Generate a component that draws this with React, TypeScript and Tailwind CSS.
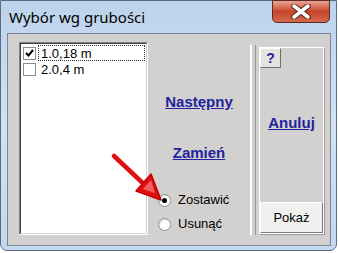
import React from 'react'

const items = [
  { label: '1.0,18 m', checked: true },
  { label: '2.0,4 m', checked: false },
]

function Radio({ label, on }: { label: string; on?: boolean }) {
  return (
    <label className="flex items-center gap-[7px] h-[24px] text-[13px] text-black">
      <span className="w-[13px] h-[13px] rounded-full bg-white border border-[#8e8f8f] shadow-[inset_1px_1px_1px_rgba(0,0,0,0.15)] flex items-center justify-center">
        {on && <span className="w-[5px] h-[5px] rounded-full bg-black" />}
      </span>
      {label}
    </label>
  )
}

export default function App() {
  return (
    <div className="w-[338px] h-[253px] overflow-hidden bg-white">
      <div
        className="relative w-[337px] h-[251px] rounded-b-[7px] border border-[#5a6b80] bg-gradient-to-b from-[#bcd3ec] via-[#d2e2f4] to-[#c3d7ee] flex flex-col"
        style={{ fontFamily: '"Liberation Sans", Arial, sans-serif' }}
      >
        {/* title bar */}
        <div className="h-[32px] flex items-start justify-between">
          <span className="pl-[8px] pt-[5px] text-[15px] text-black" style={{ fontFamily: '"Noto Sans", sans-serif' }}>
            Wybór wg grubości
          </span>
          <div className="mr-[6px] w-[58px] h-[23px] -mt-px rounded-b-[5px] border border-[#5b2a22] bg-gradient-to-b from-[#e8a492] via-[#c7432a] to-[#d26a4d] flex items-center justify-center">
            <svg width="22" height="15" viewBox="0 0 22 15">
              <path d="M4 2 L18 13 M18 2 L4 13" stroke="#5a2016" strokeWidth="5.5" strokeLinecap="round" />
              <path d="M4 2 L18 13 M18 2 L4 13" stroke="#ffffff" strokeWidth="3.5" strokeLinecap="round" />
            </svg>
          </div>
        </div>

        {/* client area */}
        <div className="ml-[6px] w-[324px] h-[213px] border border-[#7b8797] bg-[#d2d1cf] flex pt-[8px] pb-[10px]">
          {/* list box */}
          <div className="ml-[11px] w-[129px] h-[193px] border border-t-[#808080] border-l-[#808080] border-b-white border-r-white">
            <div className="w-full h-full bg-white border border-t-[#404040] border-l-[#404040] border-b-[#d4d0c8] border-r-[#d4d0c8] pt-[1px] pr-[1px]">
              {items.map((it, i) => (
                <div key={it.label} className="flex items-center h-[16px]">
                  <span className="w-[13px] h-[13px] border border-[#8f8f8f] bg-white flex items-center justify-center mx-[2px]">
                    {it.checked && (
                      <svg width="9" height="8" viewBox="0 0 9 8">
                        <path d="M1 4 L3.5 6.5 L8 1" stroke="#000" strokeWidth="2" fill="none" />
                      </svg>
                    )}
                  </span>
                  <span
                    className={`flex-1 h-[16px] pl-[2px] text-[13px] leading-[15px] text-black ${
                      i === 0 ? 'border border-dotted border-[#333]' : 'border border-transparent'
                    }`}
                  >
                    {it.label}
                  </span>
                </div>
              ))}
            </div>
          </div>

          {/* middle column */}
          <div className="w-[102px] flex flex-col items-center">
            <a className="mt-[49px] text-[15px] font-bold underline text-[#22229e]">Następny</a>
            <a className="mt-[28px] text-[15px] font-bold underline text-[#22229e]">Zamień</a>
            <div className="mt-[24px] ml-[10px] self-start flex flex-col">
              <Radio label="Zostawić" on />
              <Radio label="Usunąć" />
            </div>
          </div>

          {/* groove */}
          <div className="mt-[3px] h-[190px] w-[6px] border-l-2 border-l-white border-r border-r-[#9a9a9a] bg-[#cdcdcb]" />

          {/* right panel */}
          <div className="ml-[3px] mt-[5px] w-[65px] h-[187px] border border-white shadow-[1px_1px_0_#9a9a9a] flex flex-col">
            <div className="w-[21px] h-[20px] bg-[#e4e3e0] border border-t-white border-l-white border-b-[#6f6f6f] border-r-[#6f6f6f] flex items-center justify-center text-[14px] font-bold text-[#22229e]">
              ?
            </div>
            <div className="flex-1 flex items-center justify-center pb-[24px]">
              <a className="text-[15px] font-bold underline text-[#22229e]">Anuluj</a>
            </div>
            <div className="h-[31px] bg-[#f0f0ee] border border-t-white border-l-white border-b-[#7a7a7a] border-r-[#7a7a7a] flex items-center justify-center text-[13px] text-black">
              Pokaż
            </div>
          </div>
        </div>

        {/* red annotation arrow */}
        <svg className="absolute left-0 top-0 pointer-events-none" width="338" height="253" viewBox="0 0 338 253">
          <path d="M113 155 L147 187" stroke="#e01010" strokeWidth="4.5" strokeLinecap="round" />
          <path d="M135 190 L150 173 L160 199 Z" fill="#e01010" stroke="#c00000" strokeWidth="1.5" strokeLinejoin="round" />
          <path d="M142 188 L150 179 L154 192 Z" fill="#f06060" />
        </svg>
      </div>
    </div>
  )
}
